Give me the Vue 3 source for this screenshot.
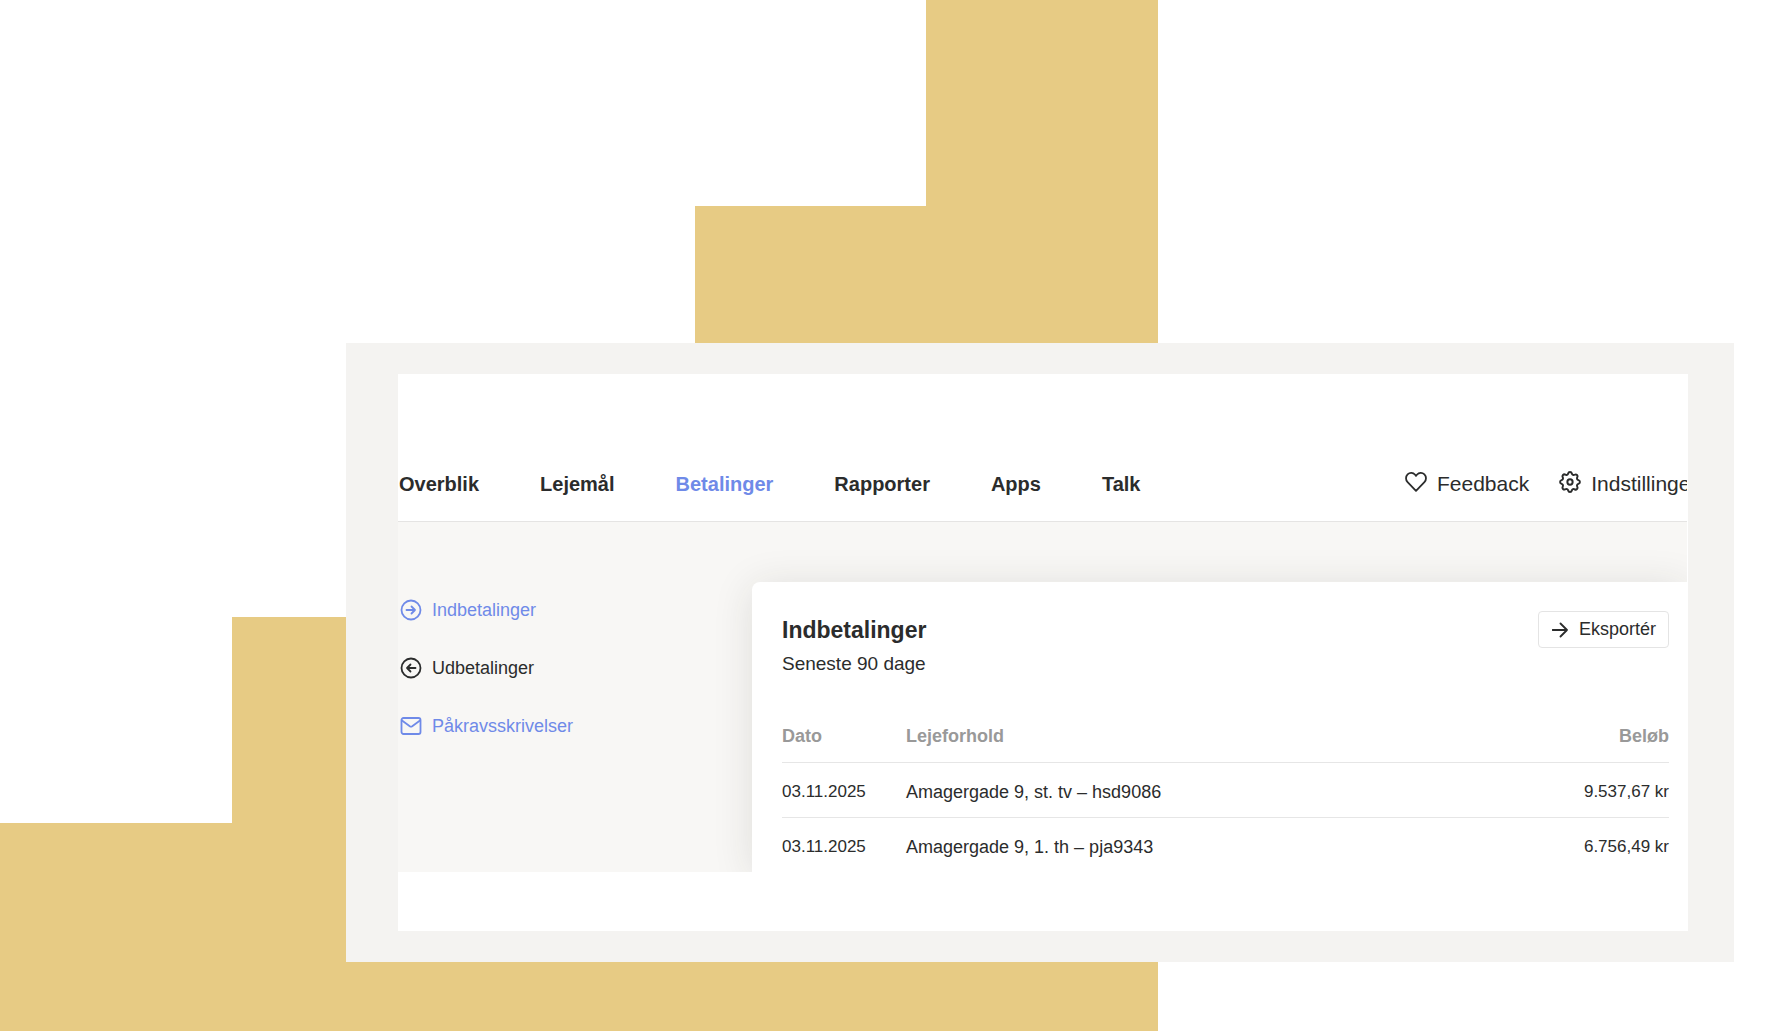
<script setup>
const navItems = [
  { label: 'Overblik' },
  { label: 'Lejemål' },
  { label: 'Betalinger', active: true },
  { label: 'Rapporter' },
  { label: 'Apps' },
  { label: 'Talk' }
];

const sideItems = [
  { label: 'Indbetalinger', icon: 'in', blue: true },
  { label: 'Udbetalinger', icon: 'out', blue: false },
  { label: 'Påkravsskrivelser', icon: 'mail', blue: true }
];

const payments = [
  { date: '03.11.2025', lease: 'Amagergade 9, st. tv – hsd9086', amount: '9.537,67 kr' },
  { date: '03.11.2025', lease: 'Amagergade 9, 1. th – pja9343', amount: '6.756,49 kr' }
];
</script>

<template>
  <div class="page">
    <div class="stairs" aria-hidden="true">
      <span class="step step-1"></span>
      <span class="step step-2"></span>
      <span class="step step-3"></span>
      <span class="step step-4"></span>
      <span class="step step-5"></span>
    </div>

    <div class="frame">
      <div class="window">
        <header class="topbar">
          <nav class="nav">
            <a
              v-for="item in navItems"
              :key="item.label"
              href="#"
              class="nav-link"
              :class="{ active: item.active }"
            >{{ item.label }}</a>
          </nav>
          <div class="tools">
            <a href="#" class="tool">
              <svg class="icon" viewBox="0 0 22 22">
                <path d="M11 19.8 L2.6 11.2 C0.5 9 0.5 5.4 2.6 3.3 C4.9 1.1 8.1 1.5 9.9 3.5 L11 4.8 L12.1 3.5 C13.9 1.5 17.1 1.1 19.4 3.3 C21.5 5.4 21.5 9 19.4 11.2 Z" />
              </svg>
              Feedback
            </a>
            <a href="#" class="tool">
              <svg class="icon" viewBox="2 2 20 20">
                <path d="M10.325 4.317c.426 -1.756 2.924 -1.756 3.35 0a1.724 1.724 0 0 0 2.573 1.066c1.543 -.94 3.31 .826 2.37 2.37a1.724 1.724 0 0 0 1.065 2.572c1.756 .426 1.756 2.924 0 3.35a1.724 1.724 0 0 0 -1.066 2.573c.94 1.543 -.826 3.31 -2.37 2.37a1.724 1.724 0 0 0 -2.572 1.065c-.426 1.756 -2.924 1.756 -3.35 0a1.724 1.724 0 0 0 -2.573 -1.066c-1.543 .94 -3.31 -.826 -2.37 -2.37a1.724 1.724 0 0 0 -1.065 -2.572c-1.756 -.426 -1.756 -2.924 0 -3.35a1.724 1.724 0 0 0 1.066 -2.573c-.94 -1.543 .826 -3.31 2.37 -2.37c1 .608 2.296 .07 2.572 -1.065z" />
                <circle cx="12" cy="12" r="2.4" />
              </svg>
              Indstillinger
            </a>
          </div>
        </header>

        <div class="body">
          <aside class="sidebar">
            <a
              v-for="item in sideItems"
              :key="item.label"
              href="#"
              class="side-link"
              :class="{ blue: item.blue }"
            >
              <svg class="icon" viewBox="0 0 22 22">
                <template v-if="item.icon === 'in'">
                  <circle cx="11" cy="11" r="9.5" />
                  <path d="M6.5 11 H15 M11.5 7.5 L15 11 L11.5 14.5" />
                </template>
                <template v-else-if="item.icon === 'out'">
                  <circle cx="11" cy="11" r="9.5" />
                  <path d="M15.5 11 H7 M10.5 7.5 L7 11 L10.5 14.5" />
                </template>
                <template v-else>
                  <rect x="1.5" y="3" width="19" height="16" rx="2" />
                  <path d="M2 5.5 L9.8 11.2 Q11 12 12.2 11.2 L20 5.5" />
                </template>
              </svg>
              {{ item.label }}
            </a>
          </aside>

          <main class="panel">
            <div class="panel-head">
              <div>
                <h1>Indbetalinger</h1>
                <p>Seneste 90 dage</p>
              </div>
              <button type="button" class="export">
                <svg class="arrow" viewBox="0 0 16 16">
                  <path d="M0.5 8 H15 M8.5 1.5 L15 8 L8.5 14.5" />
                </svg>
                Eksportér
              </button>
            </div>

            <table>
              <thead>
                <tr>
                  <th class="date">Dato</th>
                  <th>Lejeforhold</th>
                  <th class="amount">Beløb</th>
                </tr>
              </thead>
              <tbody>
                <tr v-for="row in payments" :key="row.lease">
                  <td class="figure">{{ row.date }}</td>
                  <td>{{ row.lease }}</td>
                  <td class="figure amount">{{ row.amount }}</td>
                </tr>
              </tbody>
            </table>
          </main>
        </div>
      </div>
    </div>
  </div>
</template>

<style>
body {
  margin: 0;
  background: #fff;
}
</style>

<style scoped>
.page {
  position: relative;
  box-sizing: border-box;
  min-height: 100vh;
  padding: 343px 52px 68px 346px;
  font-family: "Liberation Sans", Arial, sans-serif;
  color: #2b2c2c;
}

.page a {
  color: inherit;
  text-decoration: none;
}

/* gold staircase behind the window */
.stairs {
  position: absolute;
  top: 0;
  bottom: 0;
  left: 0;
  right: 628px;
  display: flex;
}

.step {
  flex: 1;
  background: #e7cb84;
}

.step-1 { margin-top: 823px; }
.step-2 { margin-top: 617px; }
.step-3 { margin-top: 411px; }
.step-4 { margin-top: 206px; }

.frame {
  position: relative;
  padding: 31px 46px 31px 52px;
  background: #f4f3f1;
}

.window {
  padding: 0 1px 59px 0;
  background: #fff;
}

.topbar {
  display: flex;
  justify-content: space-between;
  padding: 96px 0 23px;
  border-bottom: 1px solid #e5e4e3;
  font-size: 20px;
  line-height: 28px;
}

.nav {
  display: flex;
  gap: 61px;
  padding-left: 1px;
  font-weight: 600;
}

.page .nav-link.active,
.page .side-link.blue {
  color: #6f8ae8;
}

.tools {
  display: flex;
  gap: 30px;
  width: 282px;
  overflow: hidden;
  font-size: 21px;
  white-space: nowrap;
}

.tool,
.side-link {
  display: flex;
  align-items: center;
  gap: 10px;
}

.icon {
  flex: none;
  width: 22px;
  height: 22px;
}

.tool .icon {
  margin-bottom: 4px;
}

.icon,
.arrow {
  fill: none;
  stroke: currentColor;
  stroke-width: 1.8;
  stroke-linecap: round;
  stroke-linejoin: round;
}

.body {
  display: flex;
  overflow: hidden;
  background: #f8f7f5;
}

.sidebar {
  display: flex;
  flex: none;
  flex-direction: column;
  gap: 34px;
  box-sizing: border-box;
  width: 354px;
  padding: 76px 0 0 2px;
  font-size: 18px;
  line-height: 24px;
}

.panel {
  flex: 1;
  margin-top: 60px;
  padding: 29px 18px 0 30px;
  border-radius: 8px 0 0 0;
  background: #fff;
  box-shadow: 0 4px 40px rgba(40, 38, 34, 0.12);
}

.panel-head {
  display: flex;
  align-items: flex-start;
  justify-content: space-between;
  margin-bottom: 31px;
}

h1 {
  margin: 4px 0 5px;
  font-size: 23px;
  font-weight: 600;
  line-height: 30px;
}

p {
  margin: 0;
  font-size: 19px;
  line-height: 28px;
}

.export {
  display: flex;
  align-items: center;
  gap: 11px;
  height: 37px;
  padding: 0 12px 0 13px;
  border: 1px solid #e4e4e4;
  border-radius: 4px;
  background: #fff;
  color: inherit;
  font-family: inherit;
  font-size: 18px;
}

.arrow {
  width: 16px;
  height: 16px;
}

table {
  width: 100%;
  border-collapse: collapse;
  font-size: 18px;
  line-height: 24px;
}

th,
td {
  padding: 15px 0 14px;
  text-align: left;
}

th {
  color: #999;
  font-weight: 600;
}

td {
  padding: 17px 0 13px;
}

tbody tr {
  border-top: 1px solid #e6e6e6;
}

.date {
  width: 124px;
}

.figure {
  font-size: 17px;
}

th.amount,
td.amount {
  text-align: right;
}
</style>
